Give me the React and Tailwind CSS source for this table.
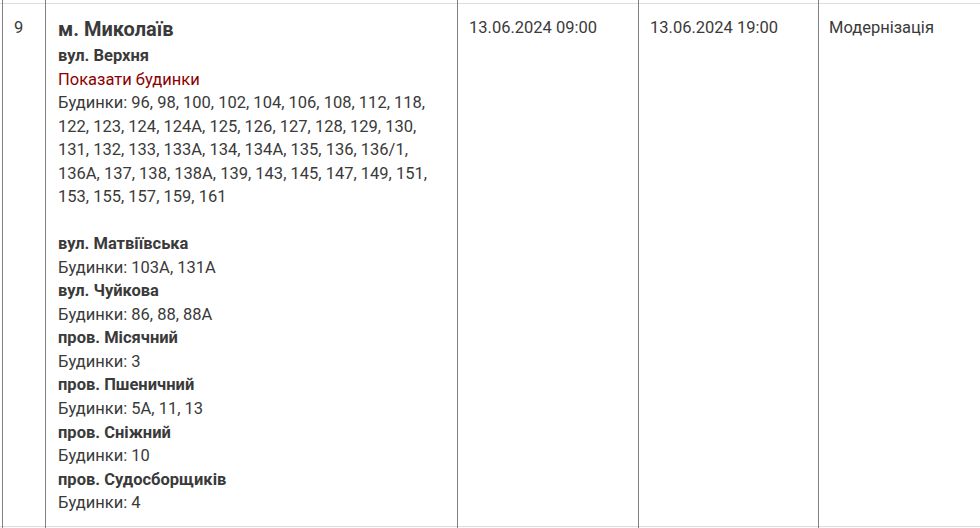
import React from "react";

const streets = [
  { name: "вул. Матвіївська", houses: "103А, 131А" },
  { name: "вул. Чуйкова", houses: "86, 88, 88А" },
  { name: "пров. Місячний", houses: "3" },
  { name: "пров. Пшеничний", houses: "5А, 11, 13" },
  { name: "пров. Сніжний", houses: "10" },
  { name: "пров. Судосборщиків", houses: "4" },
];

function Cell({ className = "", pad = "px-3 pt-[12px]", children, edge = true }) {
  return (
    <div className={`flex flex-col h-full ${edge ? "border-l border-[#808080]" : ""} ${className}`}>
      <div className="h-[3px] shrink-0" />
      <div className={`flex-1 border-t border-b border-[#dddddd] ${edge ? pad : ""}`}>{children}</div>
      <div className="h-[1px] shrink-0" />
    </div>
  );
}

export default function App() {
  return (
    <div
      className="w-[980px] h-[528px] overflow-hidden bg-white text-[#3a3a3a] text-[16.5px] leading-[23.53px]"
      style={{ fontFamily: "Roboto, 'Liberation Sans', sans-serif" }}
    >
      <div className="flex h-full">
        <Cell edge={false} className="w-[2px]" />
        <Cell className="w-[43px]" pad="pl-[11px] pt-[12px]">9</Cell>
        <Cell className="w-[412px]" pad="px-3 pt-[10px]">
          <div className="text-[20px] font-bold leading-[30px]">м. Миколаїв</div>
          <div className="font-bold">вул. Верхня</div>
          <div className="text-[#8b0000]">Показати будинки</div>
          <div>
            Будинки: 96, 98, 100, 102, 104, 106, 108, 112, 118, 122, 123, 124, 124А, 125, 126, 127, 128, 129, 130,
            131, 132, 133, 133А, 134, 134А, 135, 136, 136/1, 136А, 137, 138, 138А, 139, 143, 145, 147, 149, 151,
            153, 155, 157, 159, 161
          </div>
          <br />
          {streets.map((s) => (
            <div key={s.name}>
              <div className="font-bold">{s.name}</div>
              <div>Будинки: {s.houses}</div>
            </div>
          ))}
        </Cell>
        <Cell className="w-[181px]" pad="pl-[11px] pt-[12px]">13.06.2024 09:00</Cell>
        <Cell className="w-[180px]" pad="pl-[11px] pt-[12px]">13.06.2024 19:00</Cell>
        <Cell className="flex-1" pad="pl-[10px] pt-[12px]">Модернізація</Cell>
      </div>
    </div>
  );
}
